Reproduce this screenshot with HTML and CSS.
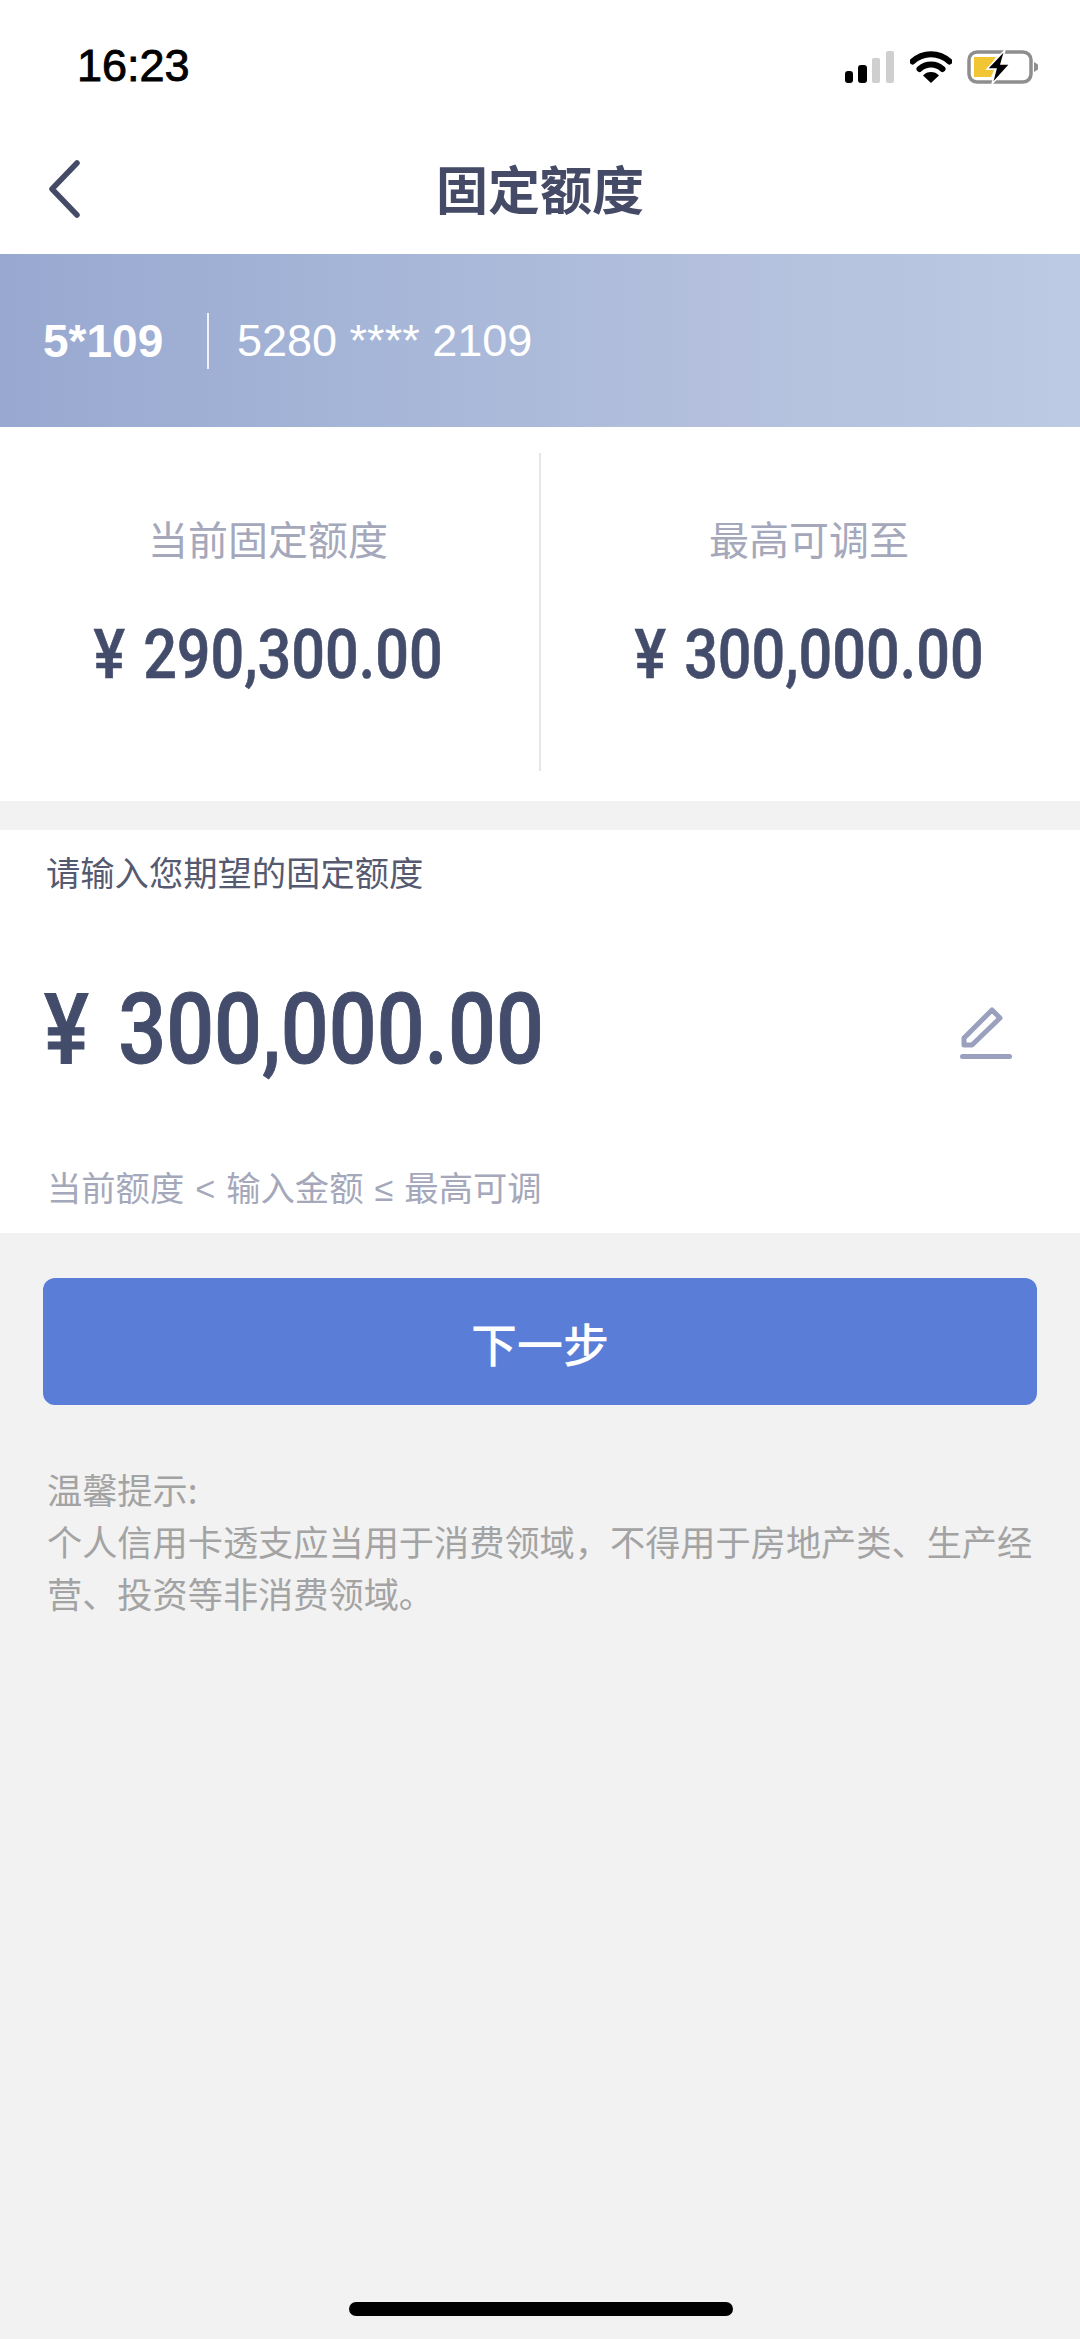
FILE: index.html
```html
<!DOCTYPE html>
<html lang="zh-CN">

<head>
    <meta charset="UTF-8">
    <meta name="viewport" content="width=device-width, initial-scale=1.0">
    <title>固定额度</title>
    <link rel="stylesheet" href="styles.css">
</head>

<body>
    <div class="status-bar">
        <span class="time">16:23</span>
        <div class="status-icons">
            <svg class="signal" width="50" height="32" viewBox="0 0 50 32">
                <rect x="0" y="20" width="8" height="12" rx="3" fill="#000"/>
                <rect x="13" y="14" width="9" height="18" rx="3" fill="#000"/>
                <rect x="27" y="7" width="8" height="25" rx="2" fill="#cfcfcf"/>
                <rect x="41" y="0" width="8" height="32" rx="2" fill="#cfcfcf"/>
            </svg>
            <svg class="wifi" width="42" height="32" viewBox="0 0 42 32">
                <path d="M2.5 10.5 A27 27 0 0 1 39.5 10.5" fill="none" stroke="#000" stroke-width="6" stroke-linecap="round"/>
                <path d="M9.5 18 A17 17 0 0 1 32.5 18" fill="none" stroke="#000" stroke-width="6" stroke-linecap="round"/>
                <path d="M21 32 L13 24.5 A11 11 0 0 1 29 24.5 Z" fill="#000"/>
            </svg>
            <svg class="battery" width="72" height="34" viewBox="0 0 72 34">
                <rect x="2" y="2" width="62" height="30" rx="8" fill="#fff" stroke="#8e8e8e" stroke-width="3.5"/>
                <path d="M7 7 H29 L20 20 H27 L24 27 H7 Z" fill="#f1c534"/>
                <path d="M38 0 L20 19 H29 L25 34 L43 14 H34 L38 0 Z" fill="#000" stroke="#fff" stroke-width="1.5"/>
                <path d="M67 12 L71 14.5 V19.5 L67 22 Z" fill="#8e8e8e"/>
            </svg>
        </div>
    </div>

    <div class="nav-bar">
        <svg class="back" width="32" height="58" viewBox="0 0 32 58">
            <path d="M29 3 L4 29 L29 55" fill="none" stroke="#454b66" stroke-width="5.5" stroke-linecap="round" stroke-linejoin="round"/>
        </svg>
        <h1 class="nav-title">固定额度</h1>
    </div>

    <div class="card-banner">
        <span class="card-name">5*109</span>
        <span class="card-number">5280 **** 2109</span>
    </div>

    <div class="limits">
        <div class="limit">
            <div class="limit-label">当前固定额度</div>
            <div class="limit-value"><span class="narrow">¥ 290,300.00</span></div>
        </div>
        <div class="limit">
            <div class="limit-label">最高可调至</div>
            <div class="limit-value"><span class="narrow">¥ 300,000.00</span></div>
        </div>
    </div>

    <div class="amount-box">
        <div class="amount-prompt">请输入您期望的固定额度</div>
        <div class="amount-row">
            <span class="amount narrow">¥ 300,000.00</span>
            <svg class="edit" width="54" height="54" viewBox="0 0 54 54">
                <path d="M5 32 L33 4 L41 12 L13 39 L5 39 Z" fill="none" stroke="#9aa0bd" stroke-width="5" stroke-linejoin="round"/>
                <rect x="1" y="48" width="52" height="5" rx="2.5" fill="#9aa0bd"/>
            </svg>
        </div>
        <div class="amount-hint">当前额度 &lt; 输入金额 ≤ 最高可调</div>
    </div>

    <button class="next-btn" type="button">下一步</button>

    <div class="tips">
        <div>温馨提示:</div>
        <div>个人信用卡透支应当用于消费领域，不得用于房地产类、生产经营、投资等非消费领域。</div>
    </div>

    <div class="home-indicator"></div>
</body>

</html>
```

FILE: styles.css
```css
* {
    box-sizing: border-box;
}

html,
body {
    margin: 0;
    padding: 0;
}

body {
    width: 1080px;
    height: 2339px;
    display: flex;
    flex-direction: column;
    background-color: #f2f2f2;
    color: #454b66;
    font-family: "Noto Sans CJK SC", "Liberation Sans", sans-serif;
    overflow: hidden;
}

.status-bar {
    height: 108px;
    padding: 44px 41px 0 77px;
    display: flex;
    justify-content: space-between;
    align-items: flex-start;
    background-color: #fff;
}

.time {
    font-family: "Liberation Sans", sans-serif;
    font-size: 45px;
    line-height: 44px;
    color: #000;
    -webkit-text-stroke: 0.9px #000;
}

.status-icons {
    display: flex;
    align-items: center;
    gap: 15px;
    padding-top: 6px;
}

.nav-bar {
    height: 146px;
    position: relative;
    display: flex;
    align-items: center;
    justify-content: center;
    background-color: #fff;
}

.back {
    position: absolute;
    left: 48px;
    top: 52px;
}

.nav-title {
    margin: 14px 0 0;
    font-size: 52px;
    font-weight: 700;
    line-height: 70px;
    color: #454b66;
}

.card-banner {
    height: 173px;
    padding-left: 43px;
    display: flex;
    align-items: center;
    background: linear-gradient(90deg, #98a8d0 0%, #a6b6d8 35%, #b3bfdc 65%, #bccae3 100%);
    color: #fff;
    font-family: "Liberation Sans", sans-serif;
}

.card-name {
    width: 164px;
    font-size: 46px;
    font-weight: 700;
}

.card-number {
    height: 56px;
    padding-left: 28px;
    border-left: 2px solid #f0f3fa;
    font-size: 45px;
    line-height: 56px;
}

.limits {
    height: 374px;
    display: flex;
    background-color: #fff;
    padding: 26px 0 30px;
}

.limit {
    flex: 1;
    text-align: center;
    padding: 57px 3px 0 0;
}

.limit:first-child {
    border-right: 2px solid #e6e6e8;
}

.limit-label {
    font-size: 40px;
    line-height: 56px;
    color: #a5a8bb;
}

.limit-value {
    margin-top: 53px;
    font-family: Roboto, "Liberation Sans", sans-serif;
    font-size: 69px;
    font-weight: 500;
    line-height: 72px;
    color: #434d6b;
    white-space: nowrap;
    word-spacing: 4px;
    -webkit-text-stroke: 0.6px #434d6b;
}

.narrow {
    display: inline-block;
    transform: scaleX(0.86);
}

.amount-box {
    height: 403px;
    margin-top: 29px;
    padding: 13px 43px 0 47px;
    background-color: #fff;
}

.amount-prompt {
    margin-left: -1px;
    font-size: 34.3px;
    line-height: 56px;
    color: #555a70;
}

.amount-row {
    height: 130px;
    margin-top: 66px;
    margin-left: -3px;
    display: flex;
    align-items: center;
    justify-content: space-between;
}

.amount {
    font-family: Roboto, "Liberation Sans", sans-serif;
    font-size: 98px;
    font-weight: 500;
    line-height: 130px;
    color: #434d6b;
    white-space: nowrap;
    word-spacing: 10px;
    transform-origin: left center;
    -webkit-text-stroke: 1px #434d6b;
}

.edit {
    margin: 5px 24px 0 0;
    flex: none;
}

.amount-hint {
    margin-top: 66px;
    font-family: "Liberation Sans", "Noto Sans CJK SC", sans-serif;
    font-size: 34.3px;
    line-height: 56px;
    word-spacing: 1.5px;
    color: #a5a8bb;
}

.next-btn {
    display: block;
    width: 994px;
    height: 127px;
    margin: 45px 0 0 43px;
    border: none;
    border-radius: 12px;
    background-color: #5a7ed8;
    color: #fff;
    font-family: inherit;
    font-size: 46px;
    font-weight: 500;
    cursor: pointer;
}

.tips {
    margin-top: 58px;
    padding: 0 44px 0 47px;
    font-size: 35.2px;
    line-height: 52px;
    color: #a3a3a3;
}

.home-indicator {
    width: 384px;
    height: 14px;
    margin: auto 0 23px 349px;
    border-radius: 7px;
    background-color: #000;
}
```
